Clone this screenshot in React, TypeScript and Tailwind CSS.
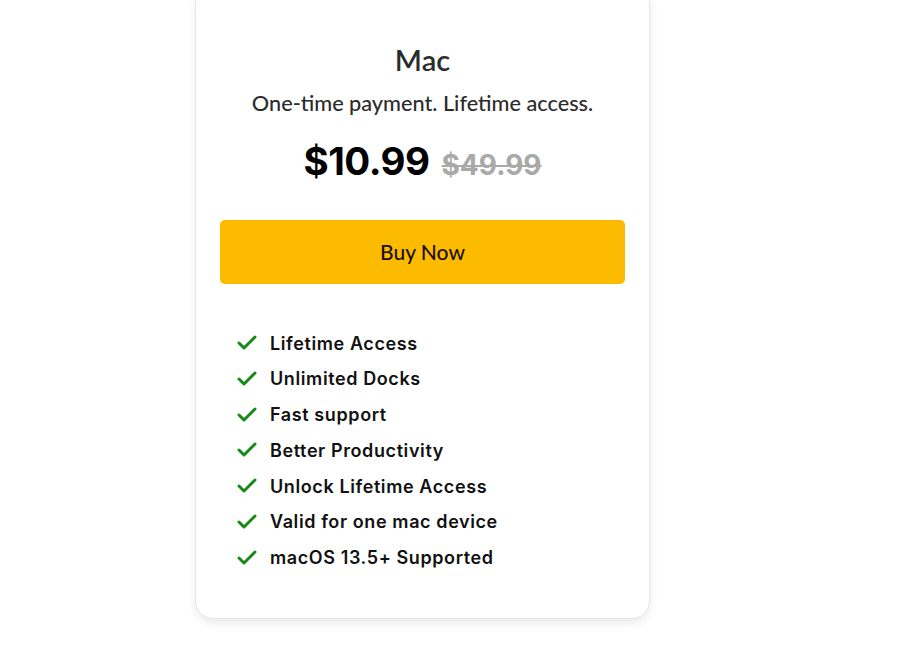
import { Check } from "lucide-react";

const features = [
  "Lifetime Access",
  "Unlimited Docks",
  "Fast support",
  "Better Productivity",
  "Unlock Lifetime Access",
  "Valid for one mac device",
  "macOS 13.5+ Supported",
];

const App = () => {
  return (
    <div className="min-h-[645px] w-full bg-white overflow-hidden">
      <div className="ml-[195px] -mt-[14px] w-[455px] rounded-[18px] border border-[#e6e6e6] bg-white px-6 pt-[54px] pb-[48px] shadow-[0_4px_10px_rgba(0,0,0,0.08)]">
        {/* Plan header */}
        <div className="flex flex-col items-center font-['Lato',sans-serif] text-[#2b2b2b]">
          <h2 className="text-[29px] font-semibold leading-[38px]">Mac</h2>
          <p className="mt-[9px] text-[21.7px] font-medium leading-[30px]">
            One-time payment. Lifetime access.
          </p>
        </div>

        {/* Price */}
        <div className="mt-[15px] flex items-baseline justify-center gap-3 font-['Inter',sans-serif]">
          <span className="text-[38.5px] font-bold leading-[56px] tracking-[-0.5px] text-black">
            $10.99
          </span>
          <span className="text-[28px] font-bold text-[#a9a9a9] line-through">
            $49.99
          </span>
        </div>

        {/* Buy button */}
        <button className="mt-[31px] flex h-[64px] w-full items-center justify-center rounded-[5px] bg-[#fdbb00] font-['Lato',sans-serif] text-[21px] font-medium text-[#1a1008]">
          Buy Now
        </button>

        {/* Features */}
        <ul className="mt-[47px] flex flex-col gap-[11.8px] pl-[15px] font-['Inter',sans-serif]">
          {features.map((item) => (
            <li key={item} className="flex items-center gap-[11px] h-[24px]">
              <Check className="h-[24px] w-[24px] text-[#168a16]" strokeWidth={3} />
              <span className="text-[18px] font-semibold tracking-[0.6px] text-[#111]">
                {item}
              </span>
            </li>
          ))}
        </ul>
      </div>
    </div>
  );
};

export default App;
